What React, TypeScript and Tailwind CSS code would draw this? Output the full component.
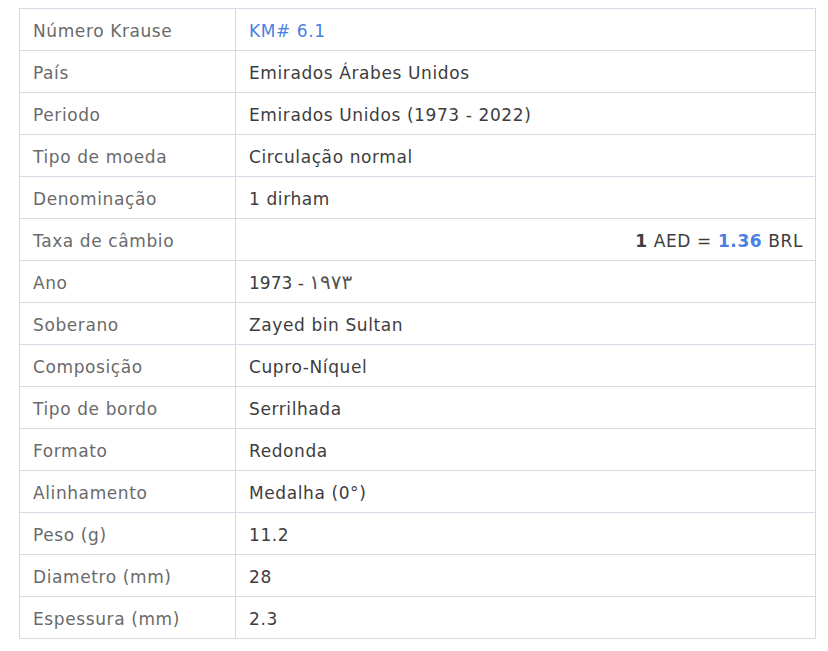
import React from 'react';

type Row = { label: string; value: React.ReactNode };

const rows: Row[] = [
  { label: 'Número Krause', value: <span className="text-[#4a7fe3]">KM# 6.1</span> },
  { label: 'País', value: 'Emirados Árabes Unidos' },
  { label: 'Periodo', value: 'Emirados Unidos (1973 - 2022)' },
  { label: 'Tipo de moeda', value: 'Circulação normal' },
  { label: 'Denominação', value: '1 dirham' },
  {
    label: 'Taxa de câmbio',
    value: (
      <div className="text-right">
        <b className="font-bold">1</b> AED = <b className="font-bold text-[#4a7fe3]">1.36</b> BRL
      </div>
    ),
  },
  {
    label: 'Ano',
    value: (
      <>
        1973 - <span className="text-[20px] tracking-[1.5px] text-[#555]">١٩٧٣</span>
      </>
    ),
  },
  { label: 'Soberano', value: 'Zayed bin Sultan' },
  { label: 'Composição', value: 'Cupro-Níquel' },
  { label: 'Tipo de bordo', value: 'Serrilhada' },
  { label: 'Formato', value: 'Redonda' },
  { label: 'Alinhamento', value: 'Medalha (0°)' },
  { label: 'Peso (g)', value: '11.2' },
  { label: 'Diametro (mm)', value: '28' },
  { label: 'Espessura (mm)', value: '2.3' },
];

export default function App() {
  return (
    <div className="w-[828px] h-[651px] bg-white pt-2 pl-[19px] font-['DejaVu_Sans',Verdana,sans-serif] text-[17px] tracking-[0.6px]">
      <table className="w-[797px] border-collapse">
        <tbody>
          {rows.map((r) => (
            <tr key={r.label} className="h-[42px]">
              <td className="w-[216px] border border-[#d3dae3] pl-[13px] pr-[14px] pt-[2px] leading-[24px] text-[#6a6a6a]">{r.label}</td>
              <td className="border border-[#d3dae3] pl-[13px] pr-[12px] pt-[2px] leading-[24px] text-[#3d3d3d]">{r.value}</td>
            </tr>
          ))}
        </tbody>
      </table>
    </div>
  );
}
